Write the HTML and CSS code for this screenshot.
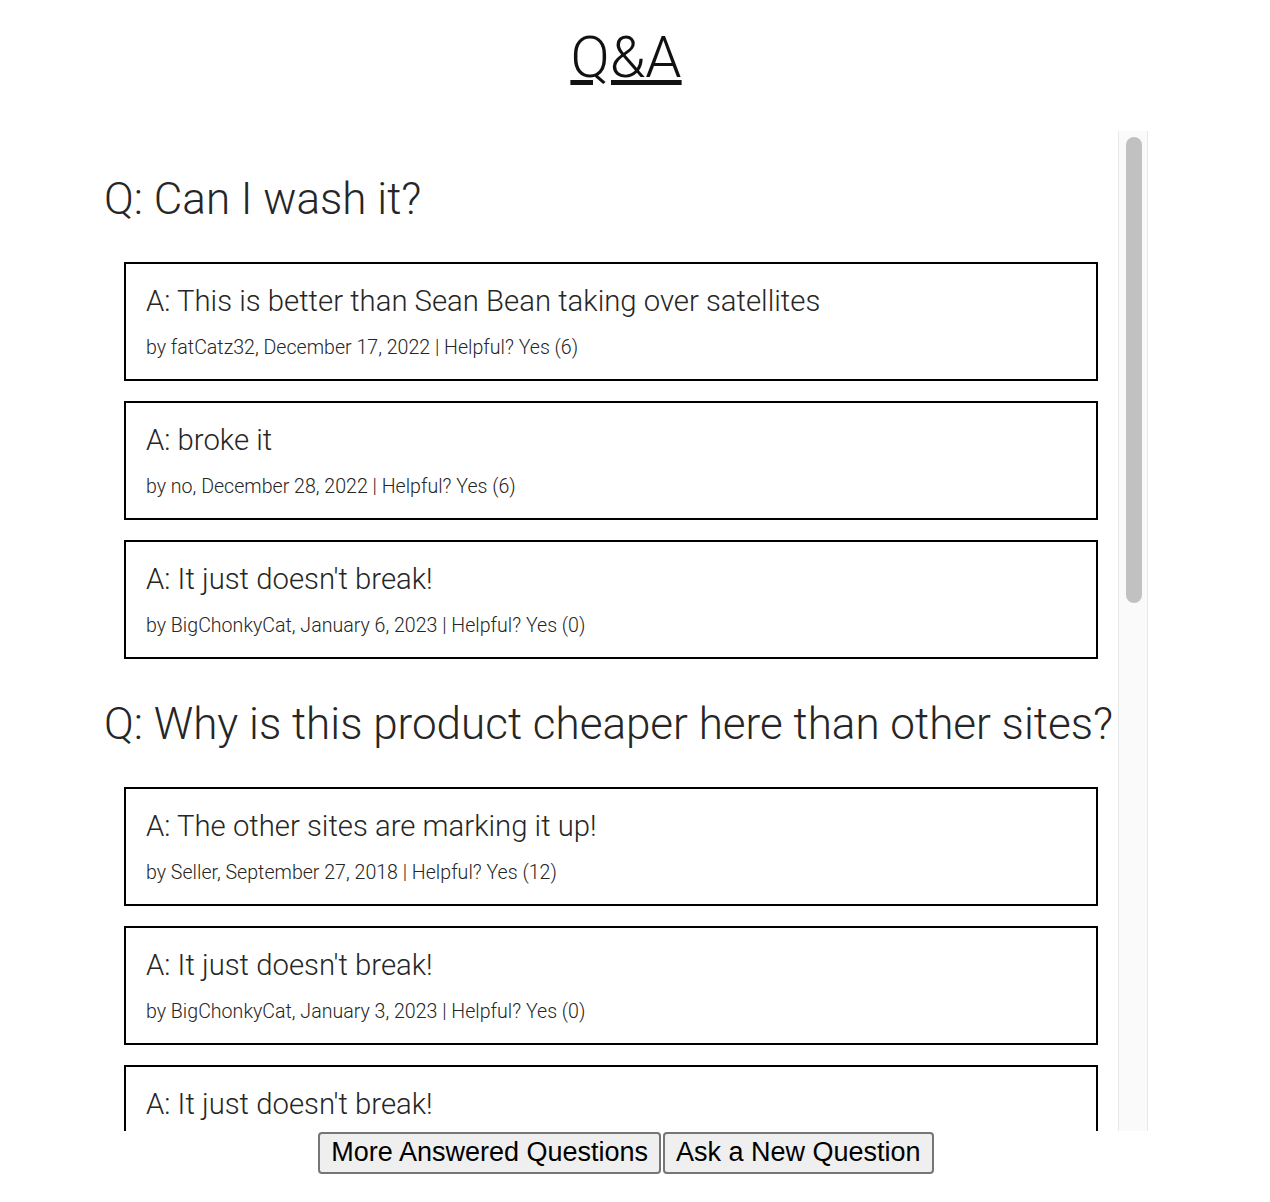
FILE: index.html
```html
<!DOCTYPE html>
<html lang="en">
<head>
<meta charset="utf-8">
<title>Q&amp;A</title>
<link rel="stylesheet" href="styles.css">
</head>
<body>
<div class="page">
  <h1 class="title"><a class="title-link" href="#">Q&amp;A</a></h1>
  <div class="qa-frame">
    <div class="qa-list">
      <section class="question">
        <h2 class="q-text">Q: Can I wash it?</h2>
        <div class="answer">
          <p class="a-text">A: This is better than Sean Bean taking over satellites</p>
          <p class="a-meta">by fatCatz32, December 17, 2022 | Helpful? Yes (6)</p>
        </div>
        <div class="answer">
          <p class="a-text">A: broke it</p>
          <p class="a-meta">by no, December 28, 2022 | Helpful? Yes (6)</p>
        </div>
        <div class="answer">
          <p class="a-text">A: It just doesn't break!</p>
          <p class="a-meta">by BigChonkyCat, January 6, 2023 | Helpful? Yes (0)</p>
        </div>
      </section>
      <section class="question">
        <h2 class="q-text">Q: Why is this product cheaper here than other sites?</h2>
        <div class="answer">
          <p class="a-text">A: The other sites are marking it up!</p>
          <p class="a-meta">by Seller, September 27, 2018 | Helpful? Yes (12)</p>
        </div>
        <div class="answer">
          <p class="a-text">A: It just doesn't break!</p>
          <p class="a-meta">by BigChonkyCat, January 3, 2023 | Helpful? Yes (0)</p>
        </div>
        <div class="answer">
          <p class="a-text">A: It just doesn't break!</p>
          <p class="a-meta">by BigChonkyCat, January 2, 2023 | Helpful? Yes (0)</p>
        </div>
      </section>
      <section class="question">
        <h2 class="q-text">Q: How long does it last?</h2>
        <div class="answer">
          <p class="a-text">A: Still going strong after a year</p>
          <p class="a-meta">by fatCatz32, December 20, 2022 | Helpful? Yes (3)</p>
        </div>
        <div class="answer">
          <p class="a-text">A: It just doesn't break!</p>
          <p class="a-meta">by BigChonkyCat, January 4, 2023 | Helpful? Yes (0)</p>
        </div>
      </section>
    </div>
    <div class="scrollbar" aria-hidden="true">
      <div class="scrollbar-thumb"></div>
    </div>
  </div>
  <div class="actions">
    <button class="btn" type="button">More Answered Questions</button>
    <button class="btn" type="button">Ask a New Question</button>
  </div>
</div>
</body>
</html>
```

FILE: styles.css
```css
html, body {
  margin: 0;
  padding: 0;
  background: #fff;
}

body {
  font-family: "Roboto Light", Roboto, "Noto Sans", sans-serif;
  font-weight: 300;
  color: #262626;
}

.page {
  width: 1252px;
  display: flex;
  flex-direction: column;
  align-items: center;
}

.title {
  margin: 23px 0 40px;
  font-size: 58px;
  font-weight: 300;
  line-height: 68px;
}

.title-link {
  color: #111;
  text-decoration: underline;
}

.qa-frame {
  display: flex;
  width: 1044px;
  height: 1000px;
}

.qa-list {
  flex: 1;
  min-width: 0;
  overflow-y: auto;
  scrollbar-width: none;
  padding-top: 3px;
}

.scrollbar {
  width: 30px;
  flex: none;
  box-sizing: border-box;
  background: #fafafa;
  border-left: 1px solid #e8e8e8;
  border-right: 1px solid #e8e8e8;
  padding: 6px 5px 0 7px;
}

.scrollbar-thumb {
  height: 466px;
  border-radius: 8px;
  background: #c1c1c1;
}

.q-text {
  margin: 39px 0 37px;
  font-size: 44px;
  font-weight: 300;
  line-height: 52px;
  white-space: nowrap;
}

.answer {
  margin: 20px;
  border: 2px solid #000;
  padding: 20px;
}

.a-text {
  margin: 0;
  font-size: 29.3px;
  line-height: 35px;
}

.a-meta {
  margin: 17px 0 0;
  font-size: 19.6px;
  line-height: 23px;
}

.actions {
  display: flex;
  justify-content: center;
  gap: 2px;
  margin-top: 1px;
}

.btn {
  font-family: "Liberation Sans", Arial, sans-serif;
  font-size: 27px;
  color: #000;
  background: #efefef;
  border: 2px solid #767676;
  border-radius: 4px;
  padding: 3px 11px 4px;
}
```
